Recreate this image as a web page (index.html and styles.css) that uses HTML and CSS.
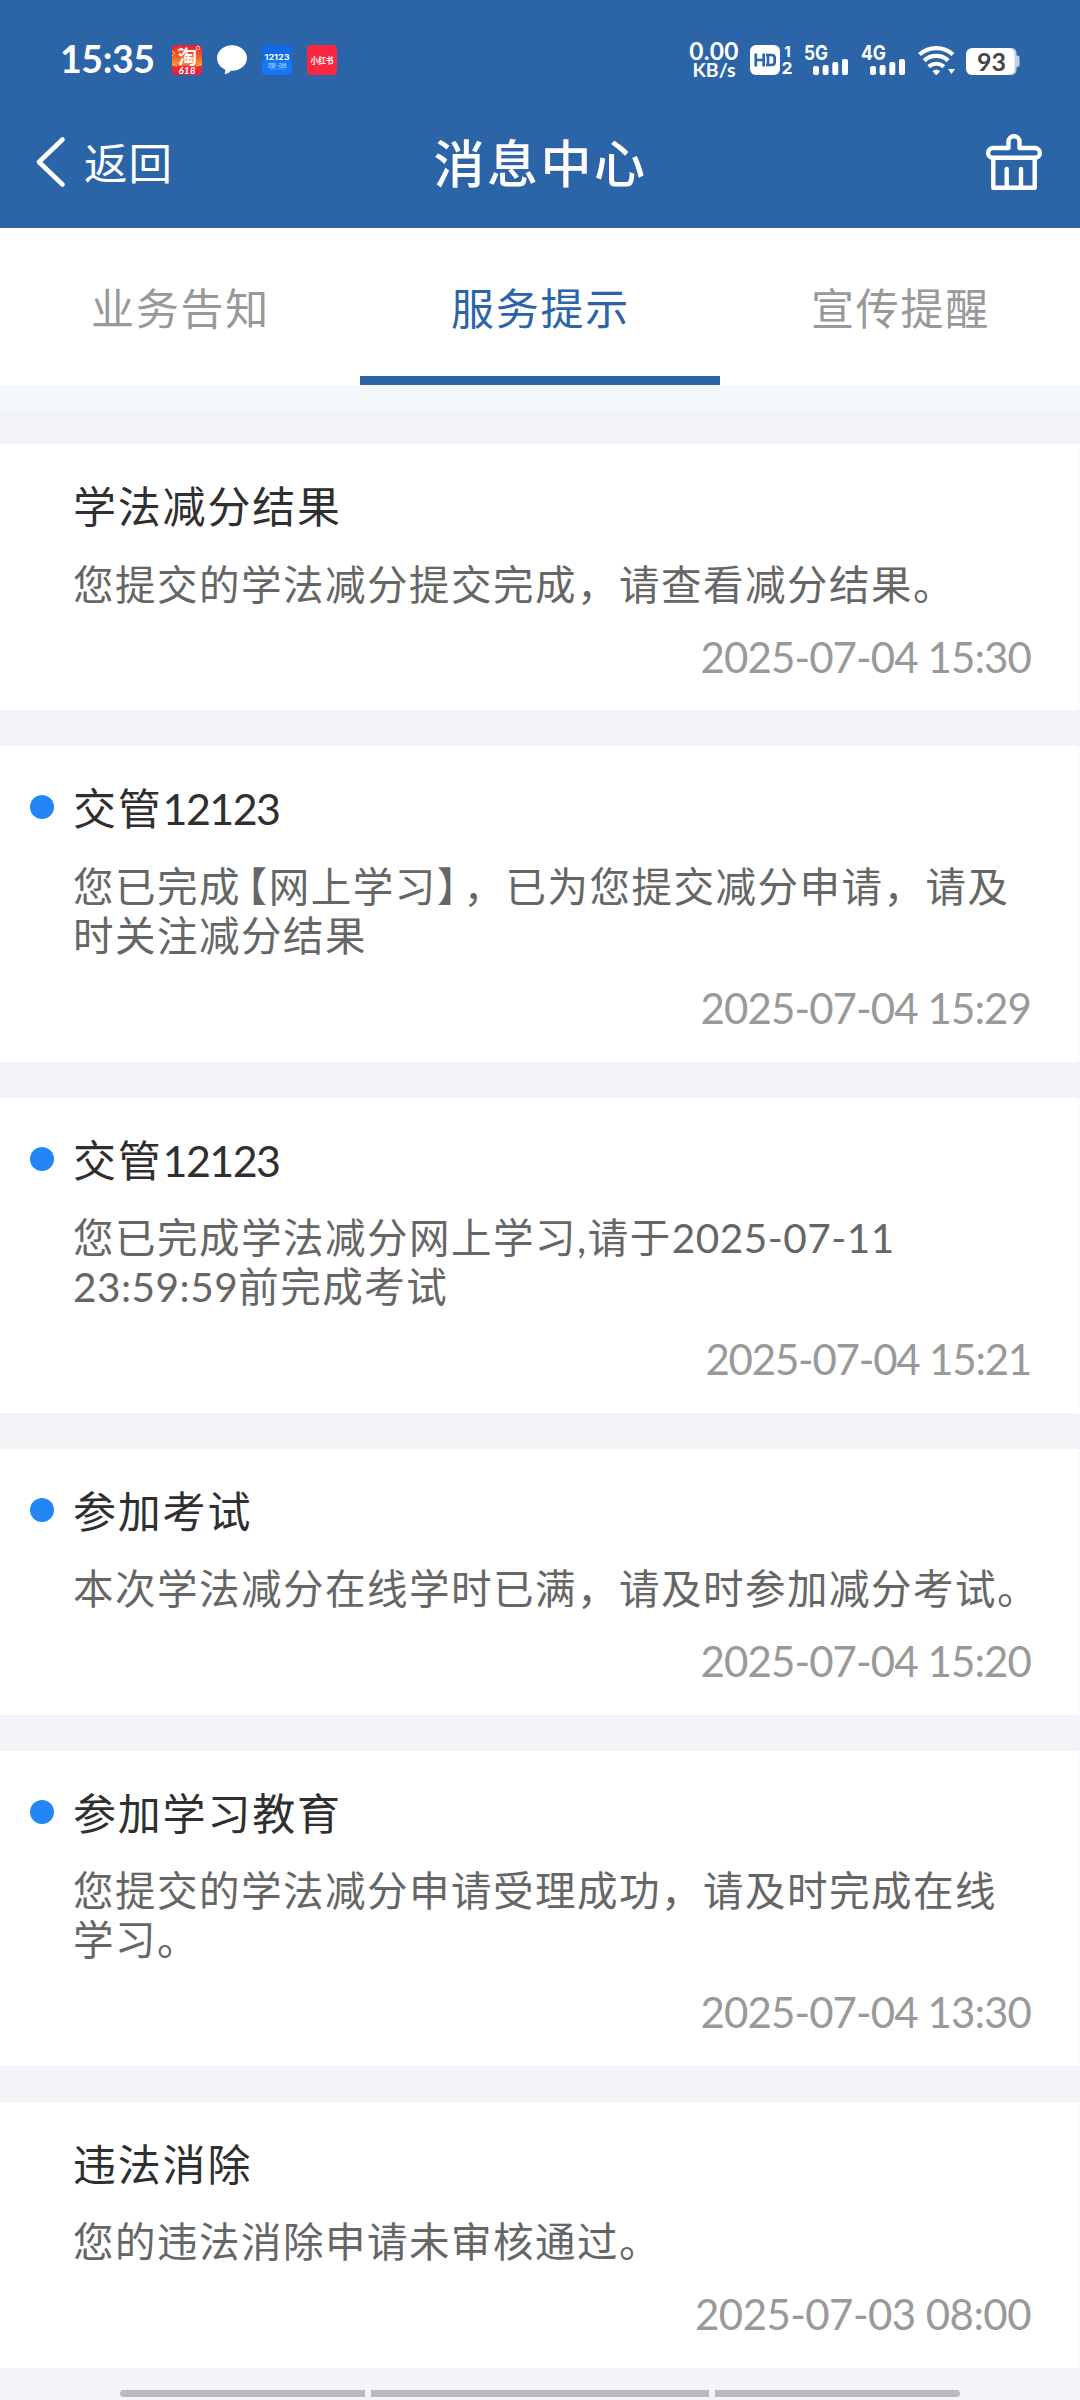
FILE: index.html
```html
<!DOCTYPE html>
<html lang="zh-CN">
<head>
<meta charset="utf-8">
<title>消息中心</title>
<link rel="stylesheet" href="styles.css">
</head>
<body>
<div class="screen">
  <header class="top">
    <div class="status">
      <div class="status-left">
        <span class="clock">15:35</span>
        <svg class="app" width="30" height="30" viewBox="0 0 30 30">
          <defs><linearGradient id="tb" x1="0" y1="0" x2="0" y2="1"><stop offset="0" stop-color="#e8183c"/><stop offset=".35" stop-color="#f8571f"/><stop offset=".62" stop-color="#fb8a35"/><stop offset=".75" stop-color="#ee2436"/><stop offset="1" stop-color="#e8203c"/></linearGradient></defs>
          <rect width="30" height="30" rx="4" fill="url(#tb)"/>
          <circle cx="26" cy="3" r="1.8" fill="none" stroke="#ffc3b8" stroke-width="1"/>
          <circle cx="7" cy="5" r="1.6" fill="#ffd24a"/>
          <path d="M0 6l3 2-3 3M0 19l5 2M30 19l-6 2" stroke="#ffd24a" fill="none"/>
          <text class="cjk-b" x="15.500" y="18.500" font-size="19" text-anchor="middle" fill="#fff">淘</text>
          <text class="lat-b" x="15" y="29" font-size="10" font-style="italic" text-anchor="middle" fill="#fff">618</text>
        </svg>
        <svg class="app" width="30" height="30" viewBox="0 0 30 30">
          <path fill="#fff" d="M15 .2C6.700.2 0 5.900 0 13c0 5 3.200 9.300 8 11.500.5 1.800.3 3.300-.6 4.700 2.800-.4 5-1.700 6.600-3.500 8.900.4 16-5.400 16-12.700C30 5.900 23.300.2 15 .2z"/>
        </svg>
        <svg class="app" width="30" height="30" viewBox="0 0 30 30">
          <rect width="30" height="30" rx="4" fill="#0f6ae8"/>
          <rect y="15" width="30" height="15" rx="4" fill="#1677f5"/>
          <text class="int-b" x="15" y="15" font-size="7.500" textLength="25" lengthAdjust="spacingAndGlyphs" text-anchor="middle" fill="#fff">12123</text>
          <text class="cjk-b" x="15" y="21.500" font-size="4.500" textLength="19" text-anchor="middle" fill="#9cc8ff">交管·在线</text>
          <path d="M8 24h14" stroke="#5aa0f8" stroke-width=".8"/>
        </svg>
        <svg class="app" width="30" height="30" viewBox="0 0 30 30">
          <rect width="30" height="30" rx="4" fill="#fb2741"/>
          <text class="cjk-b" x="15" y="18.500" font-size="9" textLength="23" lengthAdjust="spacingAndGlyphs" text-anchor="middle" fill="#fff">小红书</text>
        </svg>
      </div>
      <div class="status-right">
        <div class="speed"><span class="speed-n">0.00</span><span class="speed-u">KB/s</span></div>
        <svg class="hd" width="44" height="32" viewBox="0 0 44 32">
          <rect y="1" width="30" height="30" rx="6" fill="#fff"/>
          <path d="M5.800 9.500v13M13.700 9.500v13M5.800 16h8M18 11h3.500c2 0 3.200 1.200 3.200 3v4c0 1.800-1.200 3-3.200 3H18zM16 11h3M16 21h3" fill="none" stroke="#2c64a8" stroke-width="2.700"/>
          <text class="int-b" x="37.500" y="12.500" font-size="15" text-anchor="middle" fill="#fff">1</text>
          <text class="int-b" x="37" y="30" font-size="16" textLength="11" lengthAdjust="spacingAndGlyphs" text-anchor="middle" fill="#fff">2</text>
        </svg>
        <svg class="signal" width="46" height="32" viewBox="0 0 46 32">
          <text class="int-b" x="0" y="16" font-size="20" textLength="24" lengthAdjust="spacingAndGlyphs" fill="#fff">5G</text>
          <g fill="#fff"><rect x="9" y="22" width="6" height="9" rx="2"/><rect x="18.600" y="21" width="6" height="10" rx="2"/><rect x="28.300" y="18" width="6" height="13" rx="2"/><rect x="38" y="15" width="6" height="16" rx="2"/></g>
        </svg>
        <svg class="signal" width="46" height="32" viewBox="0 0 46 32">
          <text class="int-b" x="0" y="16" font-size="20" textLength="25" lengthAdjust="spacingAndGlyphs" fill="#fff">4G</text>
          <g fill="#fff"><rect x="9" y="22" width="6" height="9" rx="2"/><rect x="18.600" y="21" width="6" height="10" rx="2"/><rect x="28.300" y="18" width="6" height="13" rx="2"/><rect x="38" y="15" width="6" height="16" rx="2"/></g>
        </svg>
        <svg class="wifi" width="38" height="32" viewBox="0 0 38 32">
          <g fill="none" stroke="#fff" stroke-width="4.200"><path d="M1.500 10.500a25 25 0 0 1 33.500 0"/><path d="M6.200 16.600a17.500 17.500 0 0 1 24 0"/><path d="M10.800 22.800a10.800 10.800 0 0 1 15 0"/></g>
          <path fill="#fff" d="M14.500 27q3.800-3 7.600 0l-2.600 3.300q-1.200 1.200-2.400 0zM30 25h7l-3.500 5z"/>
        </svg>
        <svg class="battery" width="54" height="32" viewBox="0 0 54 32">
          <path d="M44 4h1.500a5 5 0 0 1 5 5v2.500h1a2 2 0 0 1 2 2V21a2 2 0 0 1-2 2h-1v3a5 5 0 0 1-5 5H44z" fill="#c0d1e5"/>
          <rect y="4" width="48.500" height="27" rx="6" fill="#fff"/>
          <text class="lat-b" x="25.500" y="26.500" font-size="25" text-anchor="middle" fill="#444">93</text>
        </svg>
      </div>
    </div>
    <div class="nav">
      <div class="back">
        <svg width="30" height="52" viewBox="0 0 30 52"><path d="M26.500 3.500L3 26l23.500 22.500" fill="none" stroke="#fff" stroke-width="4.600" stroke-linecap="round" stroke-linejoin="round"/></svg>
        <span>返回</span>
      </div>
      <h1>消息中心</h1>
      <svg class="trash" width="56" height="56" viewBox="0 0 56 56">
        <g fill="none" stroke="#fff" stroke-width="4.400" stroke-linejoin="round" stroke-linecap="round">
          <path d="M22.500 14V7.700a5.500 5.500 0 0 1 11 0V14H49a4.900 4.900 0 0 1 0 9.800H7A4.900 4.900 0 0 1 7 14z"/>
          <path d="M7.300 24v29.800h41.400V24M20.700 35v18M35 35v18"/>
        </g>
      </svg>
    </div>
  </header>
  <nav class="tabs">
    <div class="tab">业务告知</div>
    <div class="tab active">服务提示</div>
    <div class="tab">宣传提醒</div>
  </nav>
  <main class="list">
    <article class="card">
      <h2>学法减分结果</h2>
      <p>您提交的学法减分提交完成，请查看减分结果。</p>
      <time>2025-07-04 15:30</time>
    </article>
    <article class="card unread">
      <h2>交管<span class="num">12123</span></h2>
      <p>您已完成<span class="open">【</span>网上学习<span class="close">】</span>，已为您提交减分申请，请及<br>时关注减分结果</p>
      <time>2025-07-04 15:29</time>
    </article>
    <article class="card unread">
      <h2>交管<span class="num">12123</span></h2>
      <p>您已完成学法减分网上学习,请于<span class="num">2025-07-11</span><br><span class="num">23:59:59</span>前完成考试</p>
      <time class="narrow">2025-07-04 15:21</time>
    </article>
    <article class="card unread">
      <h2>参加考试</h2>
      <p>本次学法减分在线学时已满，请及时参加减分考试。</p>
      <time>2025-07-04 15:20</time>
    </article>
    <article class="card unread">
      <h2>参加学习教育</h2>
      <p>您提交的学法减分申请受理成功，请及时完成在线<br>学习。</p>
      <time>2025-07-04 13:30</time>
    </article>
    <article class="card">
      <h2>违法消除</h2>
      <p>您的违法消除申请未审核通过。</p>
      <time class="wide">2025-07-03 08:00</time>
    </article>
  </main>
  <footer class="gesture"><i></i><i class="mid"></i><i></i></footer>
</div>
</body>
</html>
```
FILE: styles.css
```css
* { box-sizing: border-box; margin: 0; padding: 0; }
body {
  width: 1080px;
  height: 2400px;
  overflow: hidden;
  background: #f3f3f8;
  font-family: Lato, "Noto Sans CJK SC", sans-serif;
  text-spacing-trim: space-all;
}
.screen { display: flex; flex-direction: column; height: 2400px; }
.cjk-b { font-family: "Noto Sans CJK SC", sans-serif; font-weight: 700; }
.lat-b { font-family: Lato, sans-serif; font-weight: 700; }
.int-b { font-family: Inter, sans-serif; font-weight: 700; }
svg { overflow: visible; }

.top { height: 228px; background: #2c64a8; color: #fff; flex: none; }
.status { display: flex; justify-content: space-between; height: 100px; padding: 44px 60px 0 60px; }
.status-left { display: flex; gap: 15px; padding-top: 1px; }
.clock { width: 97px; font-size: 37.500px; font-weight: 700; line-height: 28px; letter-spacing: -0.400px; white-space: nowrap; }
.status-right { display: flex; }
.speed { display: flex; flex-direction: column; align-items: center; width: 52px; margin: -4px 10px 0 0; font-weight: 700; }
.speed-n { font-size: 24.500px; line-height: 21px; letter-spacing: 0.300px; }
.speed-u { font-size: 19.500px; line-height: 17px; }
.hd { margin-right: 10px; }
.signal { margin-right: 11px; }
.wifi { margin-right: 10px; }

.nav { display: grid; grid-template-columns: 1fr auto 1fr; align-items: center; height: 124px; padding: 0 38px 0 36px; }
.back { display: flex; align-items: center; gap: 18px; font-size: 43.500px; letter-spacing: 1px; line-height: 60px; }
.back span { padding-top: 1px; }
.nav h1 { padding: 4px 0 0 3px; font-size: 51px; font-weight: 500; letter-spacing: 2.500px; line-height: 70px; }
.trash { justify-self: end; }

.tabs { display: flex; height: 157px; background: #fff; flex: none; }
.tab { flex: 1; text-align: center; font-size: 43px; letter-spacing: 1.800px; line-height: 162px; padding-left: 1px; color: #999; }
.tab.active { height: 157px; color: #2c64a8; border-bottom: 9px solid #2c64a8; }

.list { display: flex; flex-direction: column; gap: 36px; padding-top: 59.400px; background: linear-gradient(#f4f8fa 26px, #f3f3f8 26px); }
.card { position: relative; padding: 40px 47px 29.600px 73px; background: #fff; border-right: 2px solid #fbfbfd; }
.card h2 { font-size: 43px; font-weight: 400; letter-spacing: 1.800px; line-height: 46px; color: #2f2f2f; }
.card h2 .num { letter-spacing: -1.600px; }
.card p { margin-top: 29.500px; font-size: 40.500px; letter-spacing: 1.500px; line-height: 49px; color: #666; white-space: nowrap; }
.card p .num { letter-spacing: 0.500px; }
.card time { display: block; margin-top: 24px; font-size: 42px; letter-spacing: -0.900px; line-height: 48px; text-align: right; color: #999; }
.card time.narrow { letter-spacing: -1.200px; }
.card time.wide { letter-spacing: -0.550px; }
.unread::before { content: ""; position: absolute; left: 30px; top: 49px; width: 24px; height: 24px; border-radius: 50%; background: #2386f5; }
.open, .close { font-feature-settings: "halt"; }
.open { padding-left: 6px; }
.close { padding-right: 5px; }

.gesture { display: flex; gap: 6px; margin: auto 120px 3px; }
.gesture i { width: 245px; height: 7px; background: #bab9bf; border-radius: 4px 0 0 4px; }
.gesture .mid { flex: 1; border-radius: 0; }
.gesture i:last-child { border-radius: 0 4px 4px 0; }
```
